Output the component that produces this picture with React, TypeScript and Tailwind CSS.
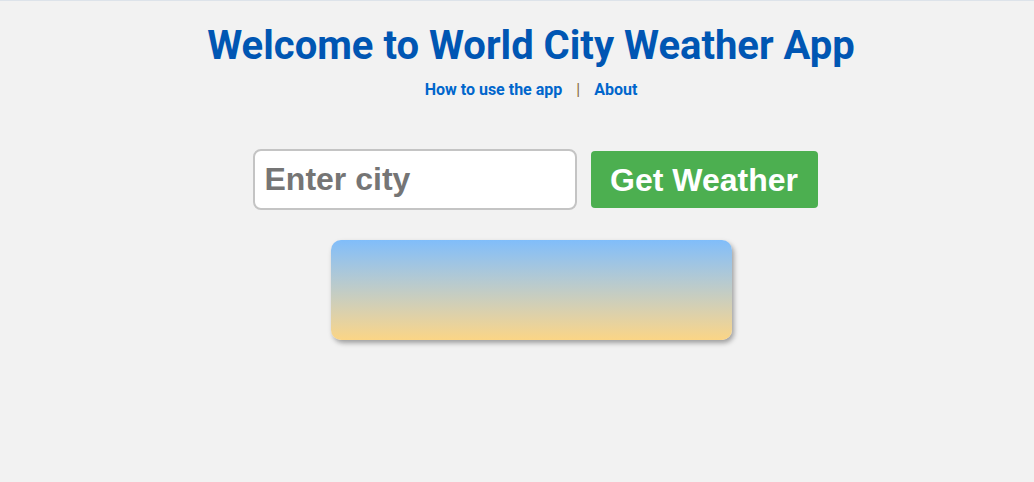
import React, { useState } from 'react';

export default function App() {
  const [city, setCity] = useState('');

  return (
    <div className="min-h-screen bg-[#f2f2f2] border-t border-[#dde3ea]" style={{ minHeight: 482 }}>
      <div className="flex flex-col items-center pt-[22px] pl-[28px]">
        {/* Header */}
        <h1 className="font-['Roboto',sans-serif] font-bold text-[40px] leading-[46px] text-[#0056b3]">
          Welcome to World City Weather App
        </h1>
        <nav className="mt-[11px] flex items-center gap-[14px] font-['Roboto',sans-serif] font-bold text-[16px] leading-[19px]">
          <a href="#" className="text-[#0066cc]">How to use the app</a>
          <span className="text-[#8a6d3b] font-normal">|</span>
          <a href="#" className="text-[#0066cc]">About</a>
        </nav>

        {/* Search */}
        <div className="mt-[50px] ml-[8px] flex items-center gap-[14px]">
          <input
            type="text"
            value={city}
            onChange={(e) => setCity(e.target.value)}
            placeholder="Enter city"
            className="w-[324px] h-[61px] px-[10px] bg-white border-2 border-[#c4c4c4] rounded-[8px] font-['Liberation_Sans',Arial,sans-serif] font-bold text-[32px] text-[#333] placeholder:text-[#757575] outline-none"
          />
          <button
            type="button"
            className="w-[227px] h-[57px] bg-[#4caf50] rounded-[4px] text-white font-['Liberation_Sans',Arial,sans-serif] font-bold text-[32px]"
          >
            Get Weather
          </button>
        </div>

        {/* Result card */}
        <div className="mt-[30px] w-[401px] h-[100px] rounded-[10px] bg-gradient-to-b from-[#80bdfa] to-[#fbd585] shadow-[2px_3px_5px_rgba(0,0,0,0.35)]" />
      </div>
    </div>
  );
}
